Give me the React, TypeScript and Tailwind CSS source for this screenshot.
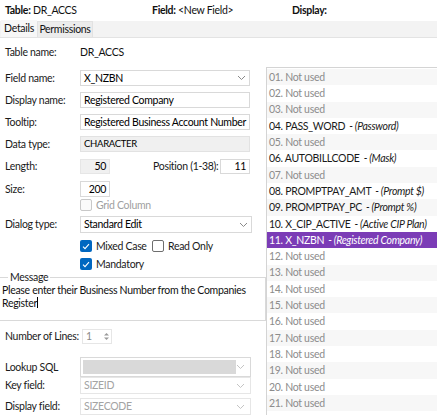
import { type FC, type ReactNode } from 'react';

const font = { fontFamily: 'Lato, "Noto Sans", sans-serif' };

const Chevron: FC<{ dim?: boolean }> = ({ dim }) => (
  <svg width="9" height="6" viewBox="0 0 9 6" className="shrink-0">
    <path d="M1 1l3.5 3.5L8 1" fill="none" stroke={dim ? '#c4c4c4' : '#8a8a8a'} strokeWidth="1" />
  </svg>
);

const Check: FC<{ checked?: boolean; disabled?: boolean }> = ({ checked, disabled }) =>
  checked ? (
    <span className="flex h-[12px] w-[12px] shrink-0 items-center justify-center rounded-[2px] bg-[#0067c0]">
      <svg width="8" height="7" viewBox="0 0 8 7">
        <path d="M1 3.6l2 2L7 1.2" fill="none" stroke="#fff" strokeWidth="1.1" />
      </svg>
    </span>
  ) : (
    <span
      className={`block h-[12px] w-[12px] shrink-0 rounded-[2px] border ${
        disabled ? 'border-[#c8c8c8] bg-[#fafafa]' : 'border-[#6e6e6e] bg-white'
      }`}
    />
  );

const Row: FC<{ label: string; className?: string; children?: ReactNode }> = ({ label, className, children }) => (
  <div className={`flex items-center whitespace-nowrap ${className ?? ''}`}>
    <div className="w-[80px] shrink-0 pl-[5px] text-[#1a1a1a]">{label}</div>
    {children}
  </div>
);

const Box: FC<{ className?: string; children?: ReactNode }> = ({ className, children }) => (
  <div className={`flex items-center border border-[#d9d9d9] px-[3px] ${className ?? ''}`}>{children}</div>
);

type Item = { name?: string; note?: string };

const items: Item[] = [
  {}, {}, {},
  { name: 'PASS_WORD', note: 'Password' },
  {},
  { name: 'AUTOBILLCODE', note: 'Mask' },
  {},
  { name: 'PROMPTPAY_AMT', note: 'Prompt $' },
  { name: 'PROMPTPAY_PC', note: 'Prompt %' },
  { name: 'X_CIP_ACTIVE', note: 'Active CIP Plan' },
  { name: 'X_NZBN', note: 'Registered Company' },
  {}, {}, {}, {}, {}, {}, {}, {}, {}, {},
];

const FieldList: FC = () => (
  <div className="mt-[29px] h-[360px] w-[200px] shrink-0 border border-[#d4d4d4] bg-white pt-[1px]">
    {items.map((it, i) => {
      const num = String(i + 1).padStart(2, '0');
      const selected = i === 10;
      return (
        <div
          key={num}
          className={`flex h-[16.3px] items-center whitespace-nowrap pl-[2px] ${
            selected ? 'bg-[#7b3cb6] text-white' : i % 2 === 0 ? 'bg-[#f7f7f7]' : 'bg-white'
          } ${it.name || selected ? (selected ? '' : 'text-[#1a1a1a]') : 'text-[#8c8c8c]'}`}
        >
          {it.name ? (
            <>
              <span>{num}. {it.name}</span>
              <span className="ml-[4px] italic">- ({it.note})</span>
            </>
          ) : (
            <span>{num}. Not used</span>
          )}
        </div>
      );
    })}
  </div>
);

export default function App() {
  return (
    <div
      className="h-[415px] w-[437px] overflow-hidden bg-white text-[10.5px] leading-none tracking-[-0.3px]"
      style={font}
    >
      {/* header */}
      <div className="flex h-[21px] items-center whitespace-nowrap text-[#111]">
        <div className="w-[152px] pl-[5px]">
          <span className="font-bold">Table:</span> DR_ACCS
        </div>
        <div className="w-[140px]">
          <span className="font-bold">Field:</span> &lt;New Field&gt;
        </div>
        <div className="font-bold">Display:</div>
      </div>

      {/* tabs */}
      <div className="flex h-[17px] items-end whitespace-nowrap border-b border-[#e3e3e3] bg-[#f3f3f3] pl-[1px]">
        <div className="flex h-[17px] w-[36px] items-center justify-center bg-[#f7f7f7] text-[#111]">Details</div>
        <div className="flex h-[16px] w-[56px] items-center justify-center border border-b-0 border-[#e2e2e2] bg-[#ececec] text-[#111]">
          Permissions
        </div>
      </div>

      <div className="flex">
        {/* left form */}
        <div className="w-[266px] shrink-0">
          <Row label="Table name:" className="mt-[6px] h-[16px]">
            <span className="text-[#111]">DR_ACCS</span>
          </Row>
          <Row label="Field name:" className="mt-[10px] h-[16px]">
            <Box className="h-[16px] w-[170px] justify-between bg-white">
              <span>X_NZBN</span>
              <Chevron />
            </Box>
          </Row>
          <Row label="Display name:" className="mt-[6px] h-[16px]">
            <Box className="h-[16px] w-[170px] bg-white">Registered Company</Box>
          </Row>
          <Row label="Tooltip:" className="mt-[6px] h-[16px]">
            <Box className="h-[16px] w-[170px] bg-white">Registered Business Account Number</Box>
          </Row>
          <Row label="Data type:" className="mt-[6px] h-[16px]">
            <Box className="h-[16px] w-[170px] border-[#e2e2e2] bg-[#f0f0f0] text-[9.5px]">CHARACTER</Box>
          </Row>
          <Row label="Length:" className="mt-[6px] h-[16px]">
            <Box className="h-[15px] w-[30px] justify-end border-[#e6e6e6] bg-[#f0f0f0]">50</Box>
            <span className="ml-[43px] text-[#1a1a1a]">Position (1-38):</span>
            <Box className="ml-auto mr-[16px] h-[15px] w-[30px] justify-end bg-white">11</Box>
          </Row>
          <Row label="Size:" className="mt-[7px] h-[16px]">
            <Box className="h-[16px] w-[30px] justify-end bg-white">200</Box>
          </Row>
          <div className="mt-[1px] flex h-[14px] items-center gap-[4px] whitespace-nowrap pl-[80px] text-[#a0a0a0]">
            <Check disabled />
            <span>Grid Column</span>
          </div>
          <Row label="Dialog type:" className="mt-[4px] h-[17px]">
            <Box className="h-[17px] w-[172px] justify-between bg-white">
              <span>Standard Edit</span>
              <Chevron />
            </Box>
          </Row>
          <div className="mt-[6px] flex h-[14px] items-center whitespace-nowrap pl-[80px] text-[#1a1a1a]">
            <div className="flex w-[72px] shrink-0 items-center gap-[4px]">
              <Check checked />
              <span>Mixed Case</span>
            </div>
            <div className="flex shrink-0 items-center gap-[4px]">
              <Check />
              <span>Read Only</span>
            </div>
          </div>
          <div className="mt-[4px] flex h-[14px] items-center gap-[4px] whitespace-nowrap pl-[80px] text-[#1a1a1a]">
            <Check checked />
            <span>Mandatory</span>
          </div>

          {/* message group */}
          <div className="relative mt-[6px] h-[44px] border-t border-r border-b border-[#d9d9d9]">
            <span className="absolute left-[8px] top-[-6px] bg-white px-[2px] text-[#1a1a1a]">Message</span>
            <div className="whitespace-nowrap pl-[2px] pt-[6px] leading-[12px] text-[#111]">
              Please enter their Business Number from the Companies
              <br />
              Register<span className="inline-block h-[11px] w-px translate-y-[1px] bg-black" />
            </div>
          </div>

          <div className="mt-[8px] flex h-[15px] items-center whitespace-nowrap">
            <span className="w-[82px] shrink-0 pl-[5px] text-[#1a1a1a]">Number of Lines:</span>
            <Box className="h-[15px] w-[30px] justify-between border-[#e6e6e6] bg-white pr-[1px] text-[#8a8a8a]">
              <span>1</span>
              <span className="flex flex-col gap-[1px]">
                <svg width="7" height="4" viewBox="0 0 7 4">
                  <path d="M1 3.5L3.5 1 6 3.5z" fill="#9a9a9a" />
                </svg>
                <svg width="7" height="4" viewBox="0 0 7 4">
                  <path d="M1 .5L3.5 3 6 .5z" fill="#9a9a9a" />
                </svg>
              </span>
            </Box>
          </div>
          <Row label="Lookup SQL" className="mt-[13px] h-[20px]">
            <Box className="h-[20px] w-[171px] justify-between border-[#cfcfcf] bg-white pl-[2px] pr-[5px]">
              <span className="h-[14px] w-[153px] bg-[#d9d9d9]" />
              <Chevron dim />
            </Box>
          </Row>
          <Row label="Key field:" className="h-[17px]">
            <Box className="h-[17px] w-[171px] justify-between border-[#e6e6e6] bg-white pr-[5px] text-[#a3a3a3]">
              <span>SIZEID</span>
              <Chevron dim />
            </Box>
          </Row>
          <Row label="Display field:" className="mt-[4px] h-[17px]">
            <Box className="h-[17px] w-[171px] justify-between border-[#e6e6e6] bg-white pr-[5px] text-[#a3a3a3]">
              <span>SIZECODE</span>
              <Chevron dim />
            </Box>
          </Row>
        </div>

        {/* field list */}
        <FieldList />
      </div>
    </div>
  );
}
